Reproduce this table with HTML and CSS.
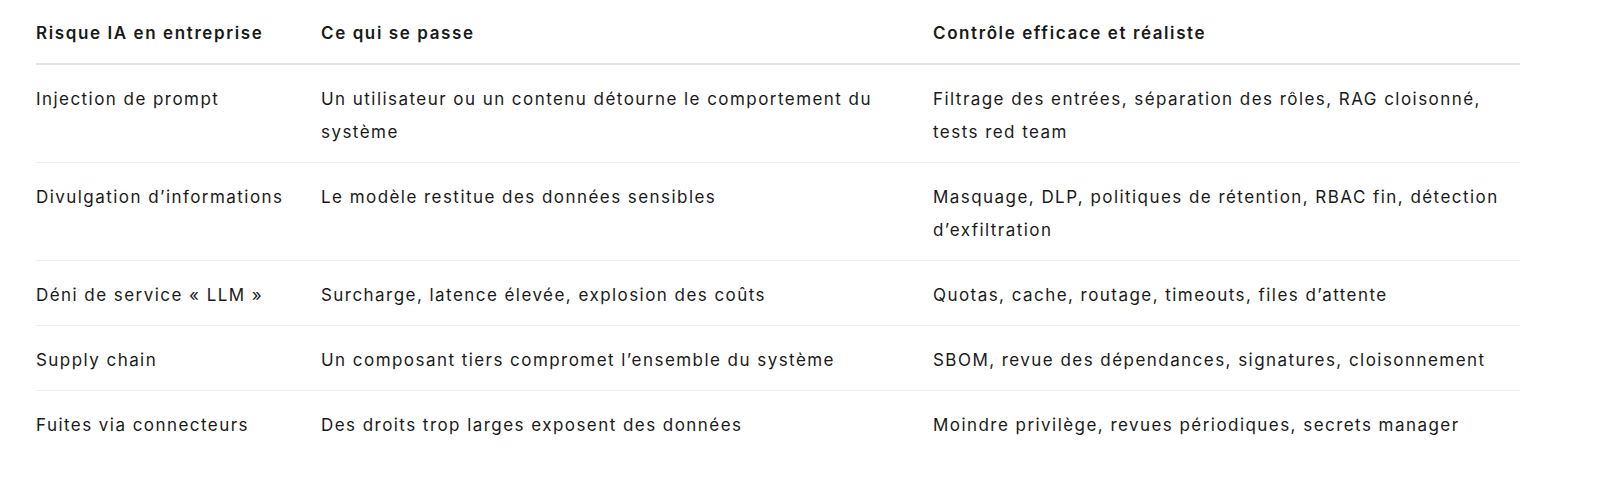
FILE: index.html
```html
<!DOCTYPE html>
<html lang="fr">
<head>
<meta charset="utf-8">
<title>Risques IA</title>
<link rel="stylesheet" href="styles.css">
</head>
<body>
<div class="wrap">
<table class="risk-table">
  <colgroup>
    <col class="c1">
    <col class="c2">
    <col class="c3">
  </colgroup>
  <thead>
    <tr>
      <th>Risque IA en entreprise</th>
      <th>Ce qui se passe</th>
      <th>Contrôle efficace et réaliste</th>
    </tr>
  </thead>
  <tbody>
    <tr>
      <td>Injection de prompt</td>
      <td>Un utilisateur ou un contenu détourne le comportement du système</td>
      <td>Filtrage des entrées, séparation des rôles, RAG cloisonné, tests red team</td>
    </tr>
    <tr>
      <td>Divulgation d’informations</td>
      <td>Le modèle restitue des données sensibles</td>
      <td>Masquage, DLP, politiques de rétention, RBAC fin, détection d’exfiltration</td>
    </tr>
    <tr>
      <td>Déni de service « LLM »</td>
      <td>Surcharge, latence élevée, explosion des coûts</td>
      <td>Quotas, cache, routage, timeouts, files d’attente</td>
    </tr>
    <tr>
      <td>Supply chain</td>
      <td>Un composant tiers compromet l’ensemble du système</td>
      <td>SBOM, revue des dépendances, signatures, cloisonnement</td>
    </tr>
    <tr>
      <td>Fuites via connecteurs</td>
      <td>Des droits trop larges exposent des données</td>
      <td>Moindre privilège, revues périodiques, secrets manager</td>
    </tr>
  </tbody>
</table>
</div>
</body>
</html>
```

FILE: styles.css
```css
html, body {
  margin: 0;
  padding: 0;
  background: #ffffff;
}

body {
  font-family: Inter, "Noto Sans", "Liberation Sans", sans-serif;
  font-size: 17px;
  letter-spacing: 1.45px;
  color: #1a1a1a;
}

.wrap {
  padding: 0 80px 0 36px;
}

.risk-table {
  width: 1484px;
  border-collapse: collapse;
  table-layout: fixed;
}

.c1 { width: 285px; }
.c2 { width: 612px; }
.c3 { width: 587px; }

.risk-table th,
.risk-table td {
  text-align: left;
  vertical-align: top;
  line-height: 33px;
  padding: 18px 24px 13px 0;
}

.risk-table th:last-child,
.risk-table td:last-child {
  padding-right: 10px;
}

.risk-table th {
  font-weight: 600;
  letter-spacing: 1.6px;
  padding-top: 17px;
  padding-bottom: 13px;
  border-bottom: 2px solid #e4e4e4;
}

.risk-table td {
  font-weight: 400;
  border-bottom: 1px solid #ececec;
}

.risk-table tbody tr:last-child td {
  border-bottom: none;
}
```
